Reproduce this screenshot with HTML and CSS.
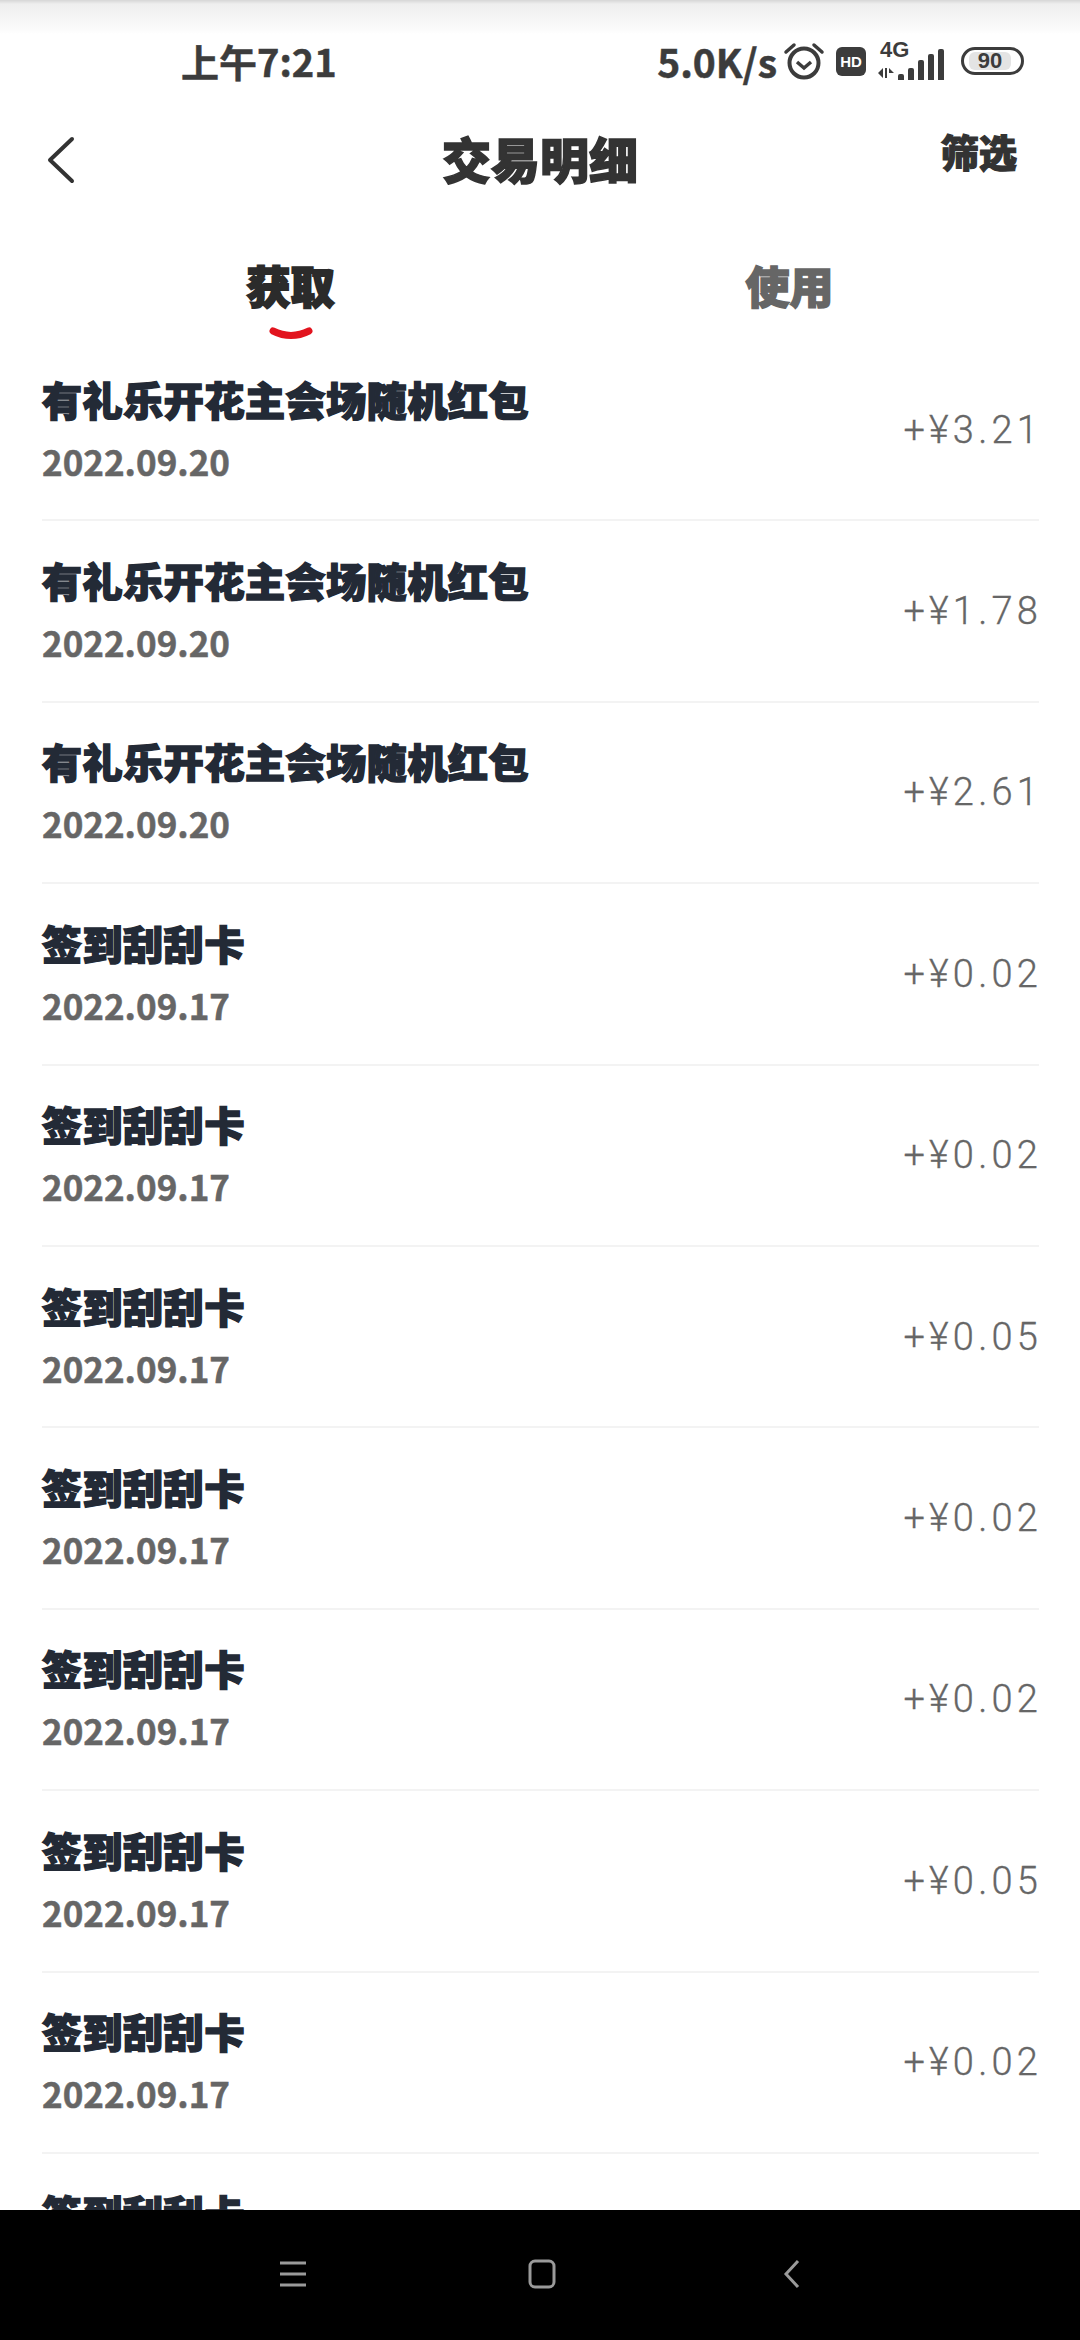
FILE: index.html

```html
<!DOCTYPE html>
<html lang="zh-CN">
<head>
    <meta charset="UTF-8">
    <title>交易明细</title>
    <link rel="stylesheet" href="styles.css">
</head>
<body>
    <div class="status">
        <div class="clock">上午7:21</div>
        <div class="status-right">
            <span class="speed">5.0K/s</span>
            <svg class="ic-alarm" width="42" height="40" viewBox="0 0 42 40">
                <circle cx="21" cy="22" r="14.5" fill="none" stroke="#3c3c3c" stroke-width="4"/>
                <path d="M14 21l7 6 7-6" fill="none" stroke="#3c3c3c" stroke-width="3.5"/>
                <path d="M3 11l8-7M39 11l-8-7" fill="none" stroke="#3c3c3c" stroke-width="3.5" stroke-linecap="round"/>
            </svg>
            <span class="hd">HD</span>
            <div class="signal">
                <span class="net">4G</span>
                <svg class="arrows" width="16" height="12" viewBox="0 0 16 12">
                    <path d="M0 6l5-5v10zM7 1h2v10H7zM11 1l5 5h-5z" fill="#3c3c3c"/>
                </svg>
                <div class="bars">
                    <i class="b1"></i><i class="b2"></i><i class="b3"></i><i class="b4"></i><i class="b5"></i>
                </div>
            </div>
            <div class="battery"><span class="level">90</span></div>
        </div>
    </div>

    <div class="navbar">
        <svg class="back" width="30" height="48" viewBox="0 0 30 48">
            <path d="M26 3L4 24l22 21" fill="none" stroke="#333" stroke-width="4" stroke-linecap="round" stroke-linejoin="round"/>
        </svg>
        <h1>交易明细</h1>
        <span class="filter">筛选</span>
    </div>

    <div class="tabs">
        <div class="tab active">
            <span>获取</span>
            <svg width="44" height="14" viewBox="0 0 44 14"><path d="M4 4q18 9 36 0" fill="none" stroke="#e2141e" stroke-width="7" stroke-linecap="round"/></svg>
        </div>
        <div class="tab"><span>使用</span></div>
    </div>

    <div class="list">
        <div class="row"><div><div class="name">有礼乐开花主会场随机红包</div><div class="date">2022.09.20</div></div><div class="amount">+¥3.21</div></div>
        <div class="row"><div><div class="name">有礼乐开花主会场随机红包</div><div class="date">2022.09.20</div></div><div class="amount">+¥1.78</div></div>
        <div class="row"><div><div class="name">有礼乐开花主会场随机红包</div><div class="date">2022.09.20</div></div><div class="amount">+¥2.61</div></div>
        <div class="row"><div><div class="name">签到刮刮卡</div><div class="date">2022.09.17</div></div><div class="amount">+¥0.02</div></div>
        <div class="row"><div><div class="name">签到刮刮卡</div><div class="date">2022.09.17</div></div><div class="amount">+¥0.02</div></div>
        <div class="row"><div><div class="name">签到刮刮卡</div><div class="date">2022.09.17</div></div><div class="amount">+¥0.05</div></div>
        <div class="row"><div><div class="name">签到刮刮卡</div><div class="date">2022.09.17</div></div><div class="amount">+¥0.02</div></div>
        <div class="row"><div><div class="name">签到刮刮卡</div><div class="date">2022.09.17</div></div><div class="amount">+¥0.02</div></div>
        <div class="row"><div><div class="name">签到刮刮卡</div><div class="date">2022.09.17</div></div><div class="amount">+¥0.05</div></div>
        <div class="row"><div><div class="name">签到刮刮卡</div><div class="date">2022.09.17</div></div><div class="amount">+¥0.02</div></div>
        <div class="row"><div><div class="name">签到刮刮卡</div><div class="date">2022.09.17</div></div><div class="amount">+¥0.02</div></div>
    </div>

    <div class="sysnav">
        <svg width="28" height="30" viewBox="0 0 28 30"><path d="M1 4h26M1 15h26M1 26h26" stroke="#9a9a9a" stroke-width="3"/></svg>
        <svg class="home" width="28" height="30" viewBox="0 0 28 30"><rect x="2" y="2" width="24" height="26" rx="5" fill="none" stroke="#9a9a9a" stroke-width="3"/></svg>
        <svg width="18" height="30" viewBox="0 0 18 30"><path d="M15 2L3 15l12 13" fill="none" stroke="#9a9a9a" stroke-width="3"/></svg>
    </div>
</body>
</html>
```

FILE: styles.css

```css
* { box-sizing: border-box; }
body { margin: 0; width: 1080px; height: 2340px; overflow: hidden; display: flex; flex-direction: column; background: #fff; font-family: "Noto Sans CJK SC", "Noto Sans", sans-serif; color: #333; }

.status { height: 90px; flex: none; display: flex; justify-content: space-between; align-items: center; padding: 32px 56px 0 181px; background: linear-gradient(#d6d6d6 0, #eee 4px, #fafafa 28px, #fff 34px); color: #3c3c3c; }
.clock { font-size: 38px; font-weight: 700; line-height: 44px; -webkit-text-stroke: 0.5px #3c3c3c; }
.status-right { display: flex; align-items: center; }
.speed { font-size: 39px; font-weight: 700; line-height: 44px; -webkit-text-stroke: 0.5px #3c3c3c; }
.ic-alarm { margin-left: 6px; }
.hd { width: 30px; height: 29px; margin-left: 11px; border-radius: 6px; background: #3c3c3c; color: #fff; font: 700 15px/29px "Liberation Sans", sans-serif; text-align: center; }
.signal { width: 66px; height: 38px; margin-left: 12px; position: relative; }
.net { position: absolute; left: 2px; top: -3px; font: 700 22px/22px "Liberation Sans", sans-serif; }
.arrows { position: absolute; left: 0; bottom: 1px; }
.bars { position: absolute; right: 0; bottom: 0; display: flex; align-items: flex-end; gap: 4px; }
.bars i { display: block; width: 6px; background: #3c3c3c; border-radius: 2px 2px 0 0; }
.b1 { height: 6px; }
.b2 { height: 12px; }
.b3 { height: 20px; }
.b4 { height: 26px; }
.b5 { height: 31px; }
.battery { width: 63px; height: 28px; margin-left: 17px; padding: 2px 7px 2px 5px; border: 3px solid #3c3c3c; border-radius: 14px; }
.level { display: block; width: 42px; height: 18px; background: #e4e4e4; border-radius: 6px; font: 700 22px/18px "Liberation Sans", sans-serif; text-align: center; }

.navbar { height: 142px; flex: none; display: grid; grid-template-columns: 1fr auto 1fr; align-items: center; padding: 0 63px; }
.back { margin: 0 0 2px -17px; }
.navbar h1 { margin: 0 0 6px; font-size: 49px; font-weight: 900; line-height: 60px; color: #333; -webkit-text-stroke: 1.5px #333; }
.filter { justify-self: end; margin-bottom: 20px; font-size: 38px; font-weight: 900; line-height: 50px; color: #333; -webkit-text-stroke: 1.2px #333; }

.tabs { height: 107px; flex: none; display: grid; grid-template-columns: 1fr 1fr; padding: 21px 41px 0; }
.tab { display: flex; flex-direction: column; align-items: center; gap: 10px; font-size: 44px; font-weight: 900; line-height: 64px; color: #666; -webkit-text-stroke: 1.5px #666; }
.tab svg { flex: none; }
.tab.active { color: #2b2b2b; -webkit-text-stroke: 2px #2b2b2b; }

.list { flex: 1; min-height: 0; overflow: hidden; padding: 1px 41px 0 42px; }
.row { height: 181.4px; display: flex; justify-content: space-between; align-items: center; border-bottom: 2px solid #f3f3f3; }
.name { font-size: 40px; font-weight: 900; line-height: 58px; letter-spacing: 0.6px; color: #232a36; -webkit-text-stroke: 1.6px #232a36; }
.date { margin-top: 11px; margin-bottom: 7px; font-size: 35px; font-weight: 700; line-height: 44px; color: #666; -webkit-text-stroke: 0.5px #666; }
.amount { font-family: Roboto, sans-serif; font-size: 38px; font-weight: 300; letter-spacing: 4.2px; margin-right: -3px; color: #666; -webkit-text-stroke: 0.3px #666; }

.sysnav { height: 130px; flex: none; background: #000; display: flex; align-items: center; padding: 0 0 2px 279px; }
.home { margin: 0 227px 0 221px; }
```
